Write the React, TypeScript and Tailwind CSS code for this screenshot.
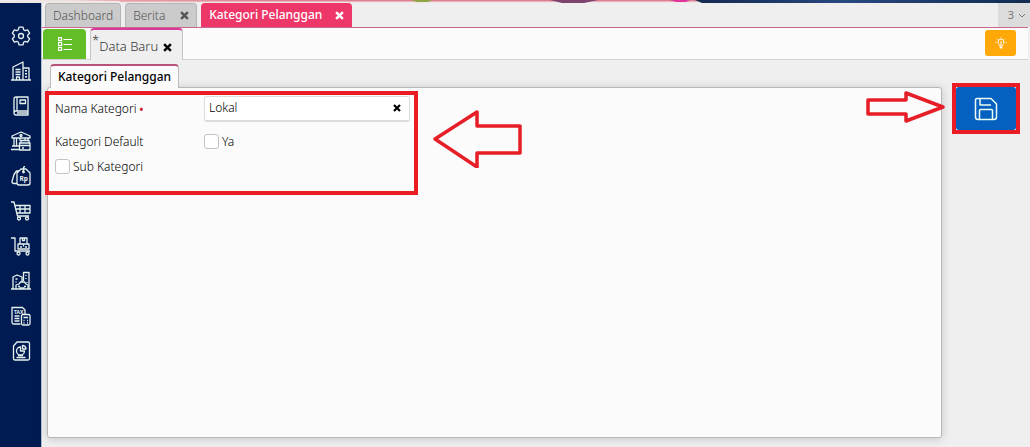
import { useState } from 'react';
import type { ReactNode } from 'react';

type MenuItem = { label: string; icon: ReactNode };

const menuItems: MenuItem[] = [
  {
    label: 'Pengaturan',
    icon: (
      <>
        <path d="M8 1.200h4l.6 2.500 1.500.9 2.500-.7 2 3.300-1.800 1.800v2l1.800 1.800-2 3.300-2.500-.7-1.500.9-.6 2.500H8l-.6-2.500-1.500-.9-2.500.7-2-3.300L3.200 11V9L1.400 7.200l2-3.300 2.500.7 1.500-.9z" />
        <circle cx="10" cy="10" r="2.500" />
      </>
    ),
  },
  {
    label: 'Perusahaan',
    icon: (
      <>
        <path d="M0 19h20M2 19V6l10-5v18M12 7h6v12M4.500 8.500h5M4.500 11h5M4.500 13.500h5M5.500 19v-3h3v3" />
        <path d="M15 9v1.500M15 12v1.500M15 15v1.500" strokeWidth="2" />
      </>
    ),
  },
  {
    label: 'Buku Besar',
    icon: (
      <>
        <path d="M3 17V3q0-2 2-2h12v14H5q-2 0-2 2t2 2h12v-4M6 1v14M17 17H6" />
        <path d="M9 4h5.500v3.500H9z" />
      </>
    ),
  },
  {
    label: 'Kas & Bank',
    icon: (
      <>
        <path d="M1 7V5l9-4 9 4v2zM3 7v8M5.500 7v8M9 7v3M14 7v2M17 7v2M1 15h7M0 18.500h8" />
        <circle cx="10" cy="4.500" r="1" />
        <path d="M10 11.500v-2h8v3M8.500 12h10.500v7H8.500zM8.500 14.500H19M11 17h2" />
      </>
    ),
  },
  {
    label: 'Penjualan',
    icon: (
      <>
        <path d="M6 7l4-4h5l4 4v10q0 2-2 2H8q-2 0-2-2zM7.500 5H5.500L3 8.500 1 15.500q0 2 2 2h3M12.500 6V2.500Q12.500.5 14 .6" />
        <circle cx="12.500" cy="6" r=".8" />
        <text x="8.500" y="14.500" fontSize="6.500" fontWeight="700" fill="currentColor" stroke="none">Rp</text>
      </>
    ),
  },
  {
    label: 'Pembelian',
    icon: (
      <>
        <path d="M0 1h3l3.500 14H18M4 4.500h15V12H5.700M4.800 8H19M9 4.500V12M14 4.500V12" />
        <circle cx="8" cy="17.500" r="1.500" />
        <circle cx="16" cy="17.500" r="1.500" />
      </>
    ),
  },
  {
    label: 'Persediaan',
    icon: (
      <>
        <path d="M0 2h4v13h15M7 8h11v5H7zM9 2h7v6H9zM11.500 2v2.500h2V2M12.500 8v2.500M9 11h2M14 11h2" />
        <circle cx="7.500" cy="17.500" r="1.500" />
        <circle cx="16.500" cy="17.500" r="1.500" />
      </>
    ),
  },
  {
    label: 'Aset Tetap',
    icon: (
      <>
        <path d="M0 18h20M2 18V6l4-2 5 2v5M12.500 10V1.500H18V18M4.500 8h2M4.500 11h1M15 4v1M15 7v1M16 11v1" />
        <path d="M5 18v-4l3-1 1.500-2h4l1.500 2 2 1v4M7 15.500h2M13 15.500h2M9 18v-1h4v1" />
      </>
    ),
  },
  {
    label: 'Pajak',
    icon: (
      <>
        <path d="M9.500 18H3q-2 0-2-2V1.500h10.500L14 4v4M3.500 10h5M3.500 12.500h5M3.500 15h5" />
        <rect x="10.500" y="8.500" width="8.500" height="10.500" rx="1.500" />
        <path d="M12.500 11.500h4.500M12.500 14.500h1M16 14.500h1M12.500 17h1M16 17h1" />
        <text x="3" y="7.500" fontSize="5" fontWeight="700" fill="currentColor" stroke="none">TAX</text>
      </>
    ),
  },
  {
    label: 'Laporan',
    icon: (
      <>
        <path d="M6 1h11q1.500 0 1.500 1.500v15q0 1.500-1.500 1.500H4q-1.500 0-1.500-1.500V5z" />
        <path d="M9.500 6a4 4 0 1 0 4 4h-4zM11.500 4.500a3.500 3.500 0 0 1 3.500 3.500h-3.500zM5.500 16.500h9M7 14.500h5" />
      </>
    ),
  },
];

function CloseIcon({ className }: { className: string }) {
  return (
    <svg viewBox="0 0 8 8" className={className} fill="none" stroke="currentColor" strokeWidth={2.2} aria-hidden="true">
      <path d="M1 1l6 6M7 1L1 7" />
    </svg>
  );
}

function Sidebar() {
  return (
    <nav className="w-[42px] shrink-0 flex flex-col items-center gap-[15px] pt-[23px] bg-[#001b52] border-r border-[#a9bfcc]">
      {menuItems.map((item) => (
        <button key={item.label} aria-label={item.label} className="h-5 w-5 text-[#e6f2ee]">
          <svg viewBox="0 0 20 20" className="h-5 w-5" fill="none" stroke="currentColor" strokeWidth={1.3} strokeLinejoin="round">
            {item.icon}
          </svg>
        </button>
      ))}
    </nav>
  );
}

// Decorative header image peeking over the tab bar
function TopBanner() {
  return (
    <svg viewBox="0 0 1030 3" preserveAspectRatio="none" className="block h-[3px] w-full shrink-0" aria-hidden="true">
      <defs>
        <linearGradient id="banner">
          <stop offset="0" stopColor="#eeeeee" />
          <stop offset=".1" stopColor="#eadede" />
          <stop offset=".18" stopColor="#e8a0a8" />
          <stop offset=".4" stopColor="#e07f92" />
        </linearGradient>
        <linearGradient id="navy">
          <stop offset="0" stopColor="#142a50" />
          <stop offset=".45" stopColor="#284880" />
          <stop offset="1" stopColor="#122c50" />
        </linearGradient>
      </defs>
      <path fill="url(#banner)" d="M0 0h700v1H0z" />
      <path fill="#f0e6e6" d="M0 1h700v2H0z" />
      <path fill="#e8b4bc" d="M120 1h580v1H120z" />
      <path fill="#8fa544" d="M411 0h22l-6 2h-10z" />
      <path fill="#7d4470" d="M550 0h48l-14 3h-22z" />
      <path fill="#e0359a" d="M670 0h20l-4 2h-10z" />
      <path fill="url(#navy)" d="M695 0h335v3H702z" />
    </svg>
  );
}

export default function App() {
  const [name, setName] = useState('Lokal');
  const [isDefault, setIsDefault] = useState(false);
  const [isSub, setIsSub] = useState(false);

  return (
    <div className="min-h-screen flex flex-col bg-[#efefef] font-['Noto_Sans',sans-serif] text-xs text-[#333]">
      <TopBanner />
      <div className="flex flex-1">
        <Sidebar />

        <div className="flex-1 min-w-0 flex flex-col mr-0.5">
          {/* Module tabs */}
          <div className="flex items-end h-[25px] gap-1 pl-[3px] border-b border-[#c9688c]">
            <button className="h-6 px-[7px] rounded-t border border-b-0 border-[#b5b5b5] bg-[#cbcbcb] font-light text-[#555]">
              Dashboard
            </button>
            <div className="flex items-center h-6 w-[72px] justify-between px-[7px] rounded-t border border-b-0 border-[#b5b5b5] bg-[#cbcbcb] font-light text-[#555]">
              <button>Berita</button>
              <button aria-label="Tutup Berita">
                <CloseIcon className="h-[9px] w-[9px]" />
              </button>
            </div>
            <div className="flex items-center h-6 w-[151px] justify-between px-2 rounded-t bg-[#ee3769] font-medium text-white">
              <button>Kategori Pelanggan</button>
              <button aria-label="Tutup Kategori Pelanggan">
                <CloseIcon className="h-[9px] w-[9px]" />
              </button>
            </div>
            <button className="ml-auto -mr-0.5 flex h-6 w-8 items-center justify-end gap-1 bg-[#dcdcdc] pr-1 text-[11px] text-[#777]">
              3
              <svg viewBox="0 0 8 5" className="w-2" fill="none" stroke="currentColor" aria-hidden="true">
                <path d="M1 1l3 3 3-3" />
              </svg>
            </button>
          </div>

          {/* Document tabs */}
          <div className="flex items-end h-8 bg-[#fbfbfb] border-b border-[#d2d2d2] pl-px">
            <button aria-label="Daftar" className="flex h-[30px] w-[43px] items-center justify-center rounded-t-sm bg-[#62bd27] text-white">
              <svg viewBox="0 0 14 14" className="h-3.5 w-3.5" fill="none" stroke="currentColor" strokeWidth={1.2} aria-hidden="true">
                <path d="M.6.6h3v3h-3zM.6 5.500h3v3h-3zM.6 10.400h3v3h-3zM5.500 2.500H14M5.500 7.500H14M5.500 12.500H14" />
              </svg>
            </button>
            <div className="-mb-px ml-1 flex h-8 w-[93px] items-center gap-[5px] rounded-t-sm border border-b-0 border-t-2 border-[#c4c4c4] border-t-[#d83b9d] bg-[#efefef] pl-px pt-1 text-[13px]">
              <button className="flex font-light">
                <span className="-mt-1.5">*</span>
                Data Baru
              </button>
              <button aria-label="Tutup Data Baru" className="text-black">
                <CloseIcon className="h-[9px] w-[9px]" />
              </button>
            </div>
            <button aria-label="Tips" className="mb-[3px] ml-auto mr-3 flex h-[26px] w-[31px] items-center justify-center rounded-[3px] bg-[#ffa808] text-white">
              <svg viewBox="0 0 12 12" className="h-3 w-3" fill="none" stroke="currentColor" aria-hidden="true">
                <path d="M4.700 9V8Q3 7 3 5a3 3 0 0 1 6 0q0 2-1.700 3v1zM6 8V4" />
                <path d="M4.700 10.500h2.600" strokeWidth="2" />
                <path d="M6 0v1M1.500 1.500l1 1M10.500 1.500l-1 1M0 5.500h1.500M10.500 5.500H12" strokeWidth=".7" />
              </svg>
            </button>
          </div>

          <div className="flex flex-1 pb-[9px] pl-[5px]">
            <main className="flex flex-1 min-w-0 flex-col pt-1">
              <div className="relative z-10 -mb-px ml-[3px] flex h-6 w-[129px] items-center justify-center rounded-t-sm border border-b-0 border-t-2 border-[#bbb] border-t-[#b9517b] bg-[#fbfbfb]">
                <h1 className="font-medium text-black">Kategori Pelanggan</h1>
              </div>

              <form className="relative flex-1 rounded-[3px] border border-[#b8b8b8] bg-[#fbfbfb] pl-[7px] pt-2 shadow-[0_1px_10px_rgba(0,0,0,0.18)]">
                <div className="flex h-[25px] items-center">
                  <label htmlFor="nama" className="w-[149px] font-light text-black">
                    Nama Kategori <span className="text-[10px] font-bold text-[#d0202c]">•</span>
                  </label>
                  <div className="flex h-[26px] w-[206px] items-center rounded-[3px] border border-b-2 border-[#dcdcdc] bg-white pl-1 pr-2">
                    <input
                      id="nama"
                      value={name}
                      onChange={(e) => setName(e.target.value)}
                      className="min-w-0 flex-1 bg-transparent font-light text-black outline-none"
                    />
                    <button type="button" aria-label="Hapus" onClick={() => setName('')} className="text-black">
                      <CloseIcon className="h-2 w-2" />
                    </button>
                  </div>
                </div>

                <div className="mt-2 flex h-[25px] items-center">
                  <span className="w-[149px] font-light text-black">Kategori Default</span>
                  <label className="flex items-center gap-[3px] font-light text-black">
                    <input
                      type="checkbox"
                      checked={isDefault}
                      onChange={(e) => setIsDefault(e.target.checked)}
                      className="h-[15px] w-[15px] appearance-none rounded-[3px] border border-[#c4c4c4] bg-white checked:bg-[#0560bf]"
                    />
                    Ya
                  </label>
                </div>

                <label className="flex h-[25px] items-center gap-[3px] font-light text-black">
                  <input
                    type="checkbox"
                    checked={isSub}
                    onChange={(e) => setIsSub(e.target.checked)}
                    className="h-[15px] w-[15px] appearance-none rounded-[3px] border border-[#c4c4c4] bg-white checked:bg-[#0560bf]"
                  />
                  Sub Kategori
                </label>

                {/* Tutorial markers */}
                <div className="pointer-events-none absolute -left-[3px] top-[3px] h-[104px] w-[373px] border-4 border-[#ea1c24]" />
                <svg viewBox="0 0 90 58" className="pointer-events-none absolute left-[385px] top-[22px] h-[58px] w-[90px]" fill="none" stroke="#e61e27" strokeWidth={3.5} strokeLinejoin="round" aria-hidden="true">
                  <path d="M2 29L44 2v14h43v27H44v14z" />
                </svg>
                <svg viewBox="0 0 80 34" className="pointer-events-none absolute -right-1 top-0.5 h-[34px] w-20" fill="none" stroke="#e61e27" strokeWidth={3.5} strokeLinejoin="round" aria-hidden="true">
                  <path d="M78 17L41 3v7H3v14h38v7z" />
                </svg>
              </form>
            </main>

            <aside className="w-[86px] shrink-0 pl-2.5 pt-[23px]">
              <div className="h-[51px] w-[68px] border-4 border-[#ea1c24] bg-[#dfe8f3]">
                <button aria-label="Simpan" className="flex h-full w-full items-center justify-center rounded-[3px] bg-[#0560bf] text-[#e9fbf4]">
                  <svg viewBox="0 0 24 24" className="h-6 w-6" fill="none" stroke="currentColor" strokeWidth={1.5} strokeLinejoin="round" aria-hidden="true">
                    <path d="M3 1.500h14l5.500 5.500v13q0 2.500-2.500 2.500H4Q1.500 22.500 1.500 20V3q0-1.500 1.500-1.500zM6 1.500V8h11M5.500 22.500v-9q0-1 1-1h11q1 0 1 1v9" />
                  </svg>
                </button>
              </div>
            </aside>
          </div>
        </div>
      </div>
    </div>
  );
}
